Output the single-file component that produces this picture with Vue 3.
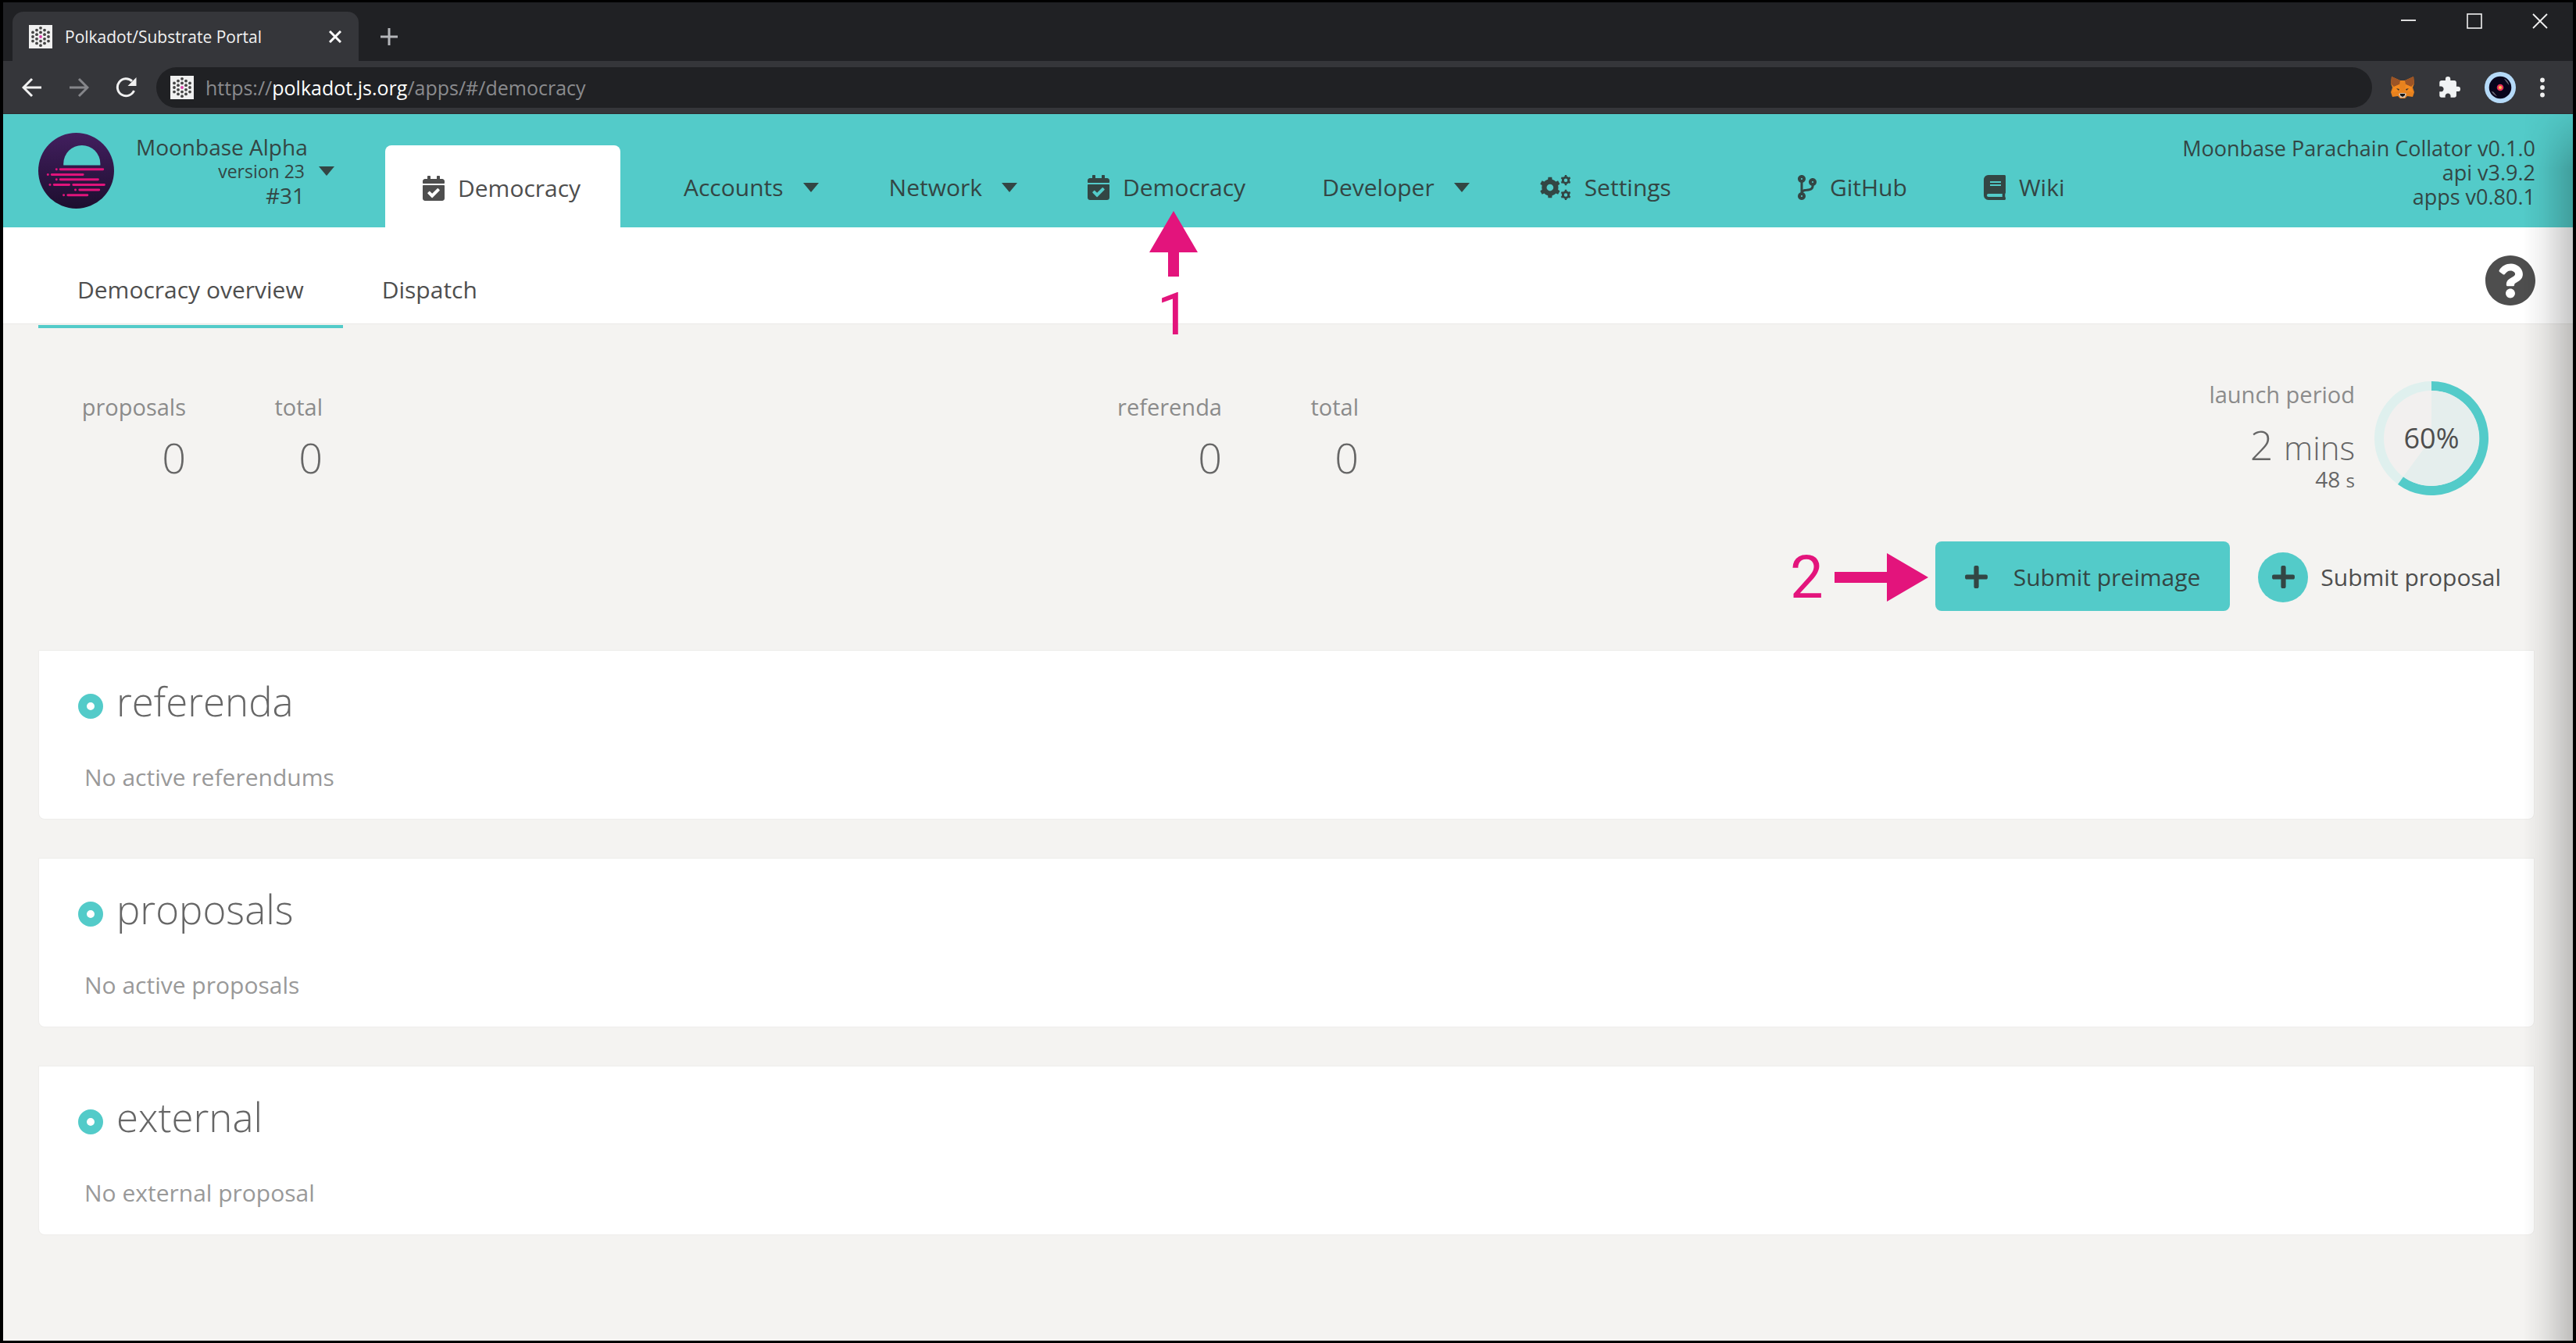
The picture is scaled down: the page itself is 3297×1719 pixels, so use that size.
<script setup>
const icons = {
  calendar: {
    box: '0 0 448 512',
    d: 'M436 160H12c-6.627 0-12-5.373-12-12v-36c0-26.51 21.49-48 48-48h48V12c0-6.627 5.373-12 12-12h40c6.627 0 12 5.373 12 12v52h128V12c0-6.627 5.373-12 12-12h40c6.627 0 12 5.373 12 12v52h48c26.51 0 48 21.49 48 48v36c0 6.627-5.373 12-12 12zM12 192h424c6.627 0 12 5.373 12 12v260c0 26.51-21.49 48-48 48H48c-26.51 0-48-21.49-48-48V204c0-6.627 5.373-12 12-12zm333.296 95.947l-28.169-28.398c-4.667-4.705-12.265-4.736-16.97-.068L194.12 364.665l-45.98-46.352c-4.667-4.705-12.266-4.736-16.971-.068l-28.397 28.17c-4.705 4.667-4.736 12.265-.068 16.97l82.601 83.269c4.667 4.705 12.265 4.736 16.97.068l142.953-141.805c4.705-4.667 4.736-12.265.068-16.97z'
  },
  branch: {
    box: '0 0 384 512',
    d: 'M384 144c0-44.2-35.8-80-80-80s-80 35.8-80 80c0 36.4 24.3 67.1 57.5 76.8-.6 16.1-4.2 28.5-11 36.9-15.4 19.2-49.3 22.4-85.2 25.7-28.2 2.6-57.4 5.4-81.3 16.9v-144c32.5-10.2 56-40.5 56-76.3 0-44.2-35.8-80-80-80S0 35.8 0 80c0 35.8 23.5 66.1 56 76.3v199.3C23.5 365.9 0 396.2 0 432c0 44.2 35.8 80 80 80s80-35.8 80-80c0-34-21.2-63.1-51.2-74.6 3.1-5.2 7.8-9.8 14.9-13.4 16.2-8.2 40.4-10.4 66.1-12.8 42.2-3.9 90-8.4 118.2-43.4 14-17.4 21.1-39.8 21.6-67.9 31.6-10.8 54.4-40.7 54.4-75.9zM80 64c8.8 0 16 7.2 16 16s-7.2 16-16 16-16-7.2-16-16 7.2-16 16-16zm0 384c-8.8 0-16-7.2-16-16s7.2-16 16-16 16 7.2 16 16-7.2 16-16 16zm224-320c8.8 0 16 7.2 16 16s-7.2 16-16 16-16-7.2-16-16 7.2-16 16-16z'
  },
  book: {
    box: '0 0 448 512',
    d: 'M448 360V24c0-13.3-10.7-24-24-24H96C43 0 0 43 0 96v320c0 53 43 96 96 96h328c13.3 0 24-10.7 24-24v-16c0-7.5-3.5-14.3-8.9-18.7-4.2-15.4-4.2-59.3 0-74.7 5.4-4.3 8.9-11.1 8.9-18.6zM128 134c0-3.3 2.7-6 6-6h212c3.3 0 6 2.7 6 6v20c0 3.3-2.7 6-6 6H134c-3.3 0-6-2.7-6-6v-20zm0 64c0-3.3 2.7-6 6-6h212c3.3 0 6 2.7 6 6v20c0 3.3-2.7 6-6 6H134c-3.3 0-6-2.7-6-6v-20zm253.4 250H96c-17.7 0-32-14.3-32-32 0-17.6 14.4-32 32-32h285.4c-1.9 17.1-1.9 46.9 0 64z'
  },
  cogs: {
    box: '0 0 640 512',
    d: gear(206, 256, 170, 214, 70, 6) + gear(528, 106, 82, 106, 36, 6) + gear(528, 406, 82, 106, 36, 6)
  }
}
const plusPath =
  'M416 208H272V64c0-17.67-14.33-32-32-32h-32c-17.67 0-32 14.33-32 32v144H32c-17.67 0-32 14.33-32 32v32c0 17.67 14.33 32 32 32h144v144c0 17.67 14.33 32 32 32h32c17.67 0 32-14.33 32-32V304h144c17.67 0 32-14.33 32-32v-32c0-17.67-14.33-32-32-32z'

// Cog outline with trapezoid teeth and a round hole (drawn with even-odd fill).
function gear(cx, cy, body, tip, hole, teeth) {
  const at = (r, a) => `${(cx + r * Math.sin(a)).toFixed(1)} ${(cy - r * Math.cos(a)).toFixed(1)}`
  const step = (Math.PI * 2) / teeth
  const points = []
  for (let i = 0; i < teeth; i++) {
    const a = i * step
    points.push(at(body, a - step * 0.25), at(tip, a - step * 0.17), at(tip, a + step * 0.17), at(body, a + step * 0.25))
    points.push(at(body, a + step * 0.5))
  }
  return `M${points.join('L')}ZM${cx - hole} ${cy}a${hole} ${hole} 0 1 0 ${hole * 2} 0a${hole} ${hole} 0 1 0 ${-hole * 2} 0Z`
}

const nav = [
  { label: 'Accounts', menu: true },
  { label: 'Network', menu: true },
  { label: 'Democracy', icon: 'calendar', step: '1' },
  { label: 'Developer', menu: true },
  { label: 'Settings', icon: 'cogs' },
  { label: 'GitHub', icon: 'branch', external: true },
  { label: 'Wiki', icon: 'book' }
]

const sections = [
  { title: 'referenda', empty: 'No active referendums' },
  { title: 'proposals', empty: 'No active proposals' },
  { title: 'external', empty: 'No external proposal' }
]

// Favicon: hexagon of dots in five columns.
const dots = [3, 4, 5, 4, 3].flatMap((n, col) =>
  Array.from({ length: n }, (_, i) => ({ x: 5 + col * 5, y: 15 + (i - (n - 1) / 2) * 5.6 }))
)
</script>

<template>
  <div class="window">
    <div class="tabstrip">
      <div class="browser-tab">
        <svg class="favicon" viewBox="0 0 30 30">
          <rect width="30" height="30" fill="#f0f0f0" />
          <circle v-for="(p, i) in dots" :key="i" :cx="p.x" :cy="p.y" r="1.9" :fill="i === 9 ? '#d93fa8' : '#444'" />
        </svg>
        <span class="tab-title">Polkadot/Substrate Portal</span>
        <button class="plain" aria-label="Close tab">
          <svg width="16" height="16" viewBox="0 0 16 16"><path d="M1 1l14 14M15 1L1 15" stroke="#fff" stroke-width="3" /></svg>
        </button>
      </div>
      <button class="plain new-tab" aria-label="New tab">
        <svg width="22" height="22" viewBox="0 0 22 22"><path d="M11 0v22M0 11h22" stroke="#b4b6b9" stroke-width="3" /></svg>
      </button>
      <div class="window-controls">
        <button class="plain" aria-label="Minimize"><svg width="20" height="20" viewBox="0 0 20 20"><path d="M0 9h19" stroke="#ddd" stroke-width="2" /></svg></button>
        <button class="plain" aria-label="Maximize"><svg width="20" height="20" viewBox="0 0 20 20"><rect x="1" y="1" width="18" height="18" fill="none" stroke="#f0f0f0" stroke-width="1.6" /></svg></button>
        <button class="plain" aria-label="Close"><svg width="20" height="20" viewBox="0 0 20 20"><path d="M1 1l18 18M19 1L1 19" stroke="#f0f0f0" stroke-width="1.8" /></svg></button>
      </div>
    </div>

    <div class="toolbar">
      <div class="history">
        <button class="plain" aria-label="Back"><svg width="26" height="26" viewBox="0 0 26 26"><path d="M25 13H3M13 2L2 13l11 11" fill="none" stroke="#f1f1f1" stroke-width="3" /></svg></button>
        <button class="plain" aria-label="Forward"><svg width="26" height="26" viewBox="0 0 26 26"><path d="M1 13h22M13 2l11 11-11 11" fill="none" stroke="#85868a" stroke-width="3" /></svg></button>
        <button class="plain" aria-label="Reload"><svg width="28" height="26" viewBox="0 0 28 26"><path d="M23.500 17A11 11 0 1 1 21 4.800" fill="none" stroke="#f1f1f1" stroke-width="3" /><path d="M26.500 0v11H15.500z" fill="#f1f1f1" /></svg></button>
      </div>
      <div class="address">
        <svg class="favicon" viewBox="0 0 30 30">
          <rect width="30" height="30" fill="#f0f0f0" />
          <circle v-for="(p, i) in dots" :key="i" :cx="p.x" :cy="p.y" r="1.9" :fill="i === 9 ? '#d93fa8' : '#444'" />
        </svg>
        <span class="url">https://<b>polkadot.js.org</b>/apps/#/democracy</span>
      </div>
      <div class="extensions">
        <button class="plain" aria-label="Wallet">
          <svg width="30" height="28" viewBox="0 0 30 28">
            <path d="M1 0l11 5h6l11-5 1 9-2 5 2 6-2 6-7-1-3 3h-6l-3-3-7 1-2-6 2-6-2-5z" fill="#e8821e" />
            <path d="M1 0l11 5-1 5-7 3-4-4zM29 0L18 5l1 5 7 3 4-4z" fill="#9c5426" />
            <path d="M4 13l7-3 1 8-10 2zM26 13l-7-3-1 8 10 2z" fill="#f58a1f" />
            <path d="M7 15l4 1-1 2zM23 15l-4 1 1 2z" fill="#333" />
            <path d="M10 22l3-1h4l3 1-2 5h-6z" fill="#d5c3b5" />
            <path d="M12 22h6v2l-3 2-3-2z" fill="#161616" />
          </svg>
        </button>
        <button class="plain" aria-label="Extensions">
          <svg width="28" height="28" viewBox="1 1 22 22"><path fill="#f1f3f4" d="M20.500 11H19V7c0-1.100-.9-2-2-2h-4V3.500a2.500 2.500 0 0 0-5 0V5H4c-1.100 0-2 .9-2 2v3.800h1.500c1.500 0 2.700 1.200 2.700 2.700S5 16.200 3.500 16.200H2V20c0 1.100.9 2 2 2h3.800v-1.500c0-1.500 1.200-2.700 2.700-2.700s2.700 1.200 2.700 2.700V22H17c1.100 0 2-.9 2-2v-4h1.500a2.500 2.500 0 0 0 0-5z" /></svg>
        </button>
        <button class="plain" aria-label="Profile">
          <svg width="40" height="40" viewBox="0 0 42 42">
            <circle cx="21" cy="21" r="21" fill="#b5daf8" />
            <circle cx="21" cy="21" r="15" fill="#08051c" />
            <path d="M26 9q6 3 7 9l-4-5zM9 26q3 5 8 7l-5-6z" fill="#6d6c78" />
            <circle cx="21" cy="21" r="4.500" fill="#e8305a" />
            <circle cx="21" cy="21" r="2.200" fill="#fbc04a" />
          </svg>
        </button>
        <button class="plain" aria-label="Browser menu">
          <svg width="6" height="26" viewBox="0 0 6 26"><g fill="#f1f1f1"><circle cx="3" cy="3.500" r="2.900" /><circle cx="3" cy="13" r="2.900" /><circle cx="3" cy="22.500" r="2.900" /></g></svg>
        </button>
      </div>
    </div>

    <div class="page">
      <header class="header">
        <svg class="logo" viewBox="86 465 292 292">
          <defs>
            <linearGradient id="moon" x1="0" y1="0" x2="0" y2="1">
              <stop offset="0" stop-color="#421f5f" />
              <stop offset="1" stop-color="#1d0e2e" />
            </linearGradient>
          </defs>
          <circle cx="232" cy="611" r="146" fill="url(#moon)" />
          <path d="M183 590v-6a71 71 0 0 1 142 0v6z" fill="#53cbc9" />
          <g stroke="#e1147b" stroke-width="9" stroke-linecap="round">
            <path d="M156 606h.1M171 606h164M123 626h.1M138 626h120M156 645h.1M171 645h145M131 665h.1M147 665h58M221 665h119M229 685h.1M245 685h75M184 705h.1M200 705h75" />
          </g>
        </svg>
        <button class="plain chain">
          <span class="chain-text">
            <span>Moonbase Alpha</span>
            <small>version 23</small>
            <span>#31</span>
          </span>
          <svg class="caret" viewBox="0 0 20 12"><path d="M0 0h20L10 12z" fill="currentColor" /></svg>
        </button>
        <a class="active-app" href="#/democracy">
          <svg class="icon" :viewBox="icons.calendar.box"><path :d="icons.calendar.d" /></svg>
          Democracy
        </a>
        <nav class="nav">
          <a
            v-for="item in nav"
            :key="item.label"
            href="#"
            class="nav-item"
            :class="{ external: item.external, plainlink: !item.menu }"
          >
            <svg v-if="item.icon" class="icon" :viewBox="icons[item.icon].box">
              <path fill-rule="evenodd" :d="icons[item.icon].d" />
            </svg>
            {{ item.label }}
            <svg v-if="item.menu" class="caret" viewBox="0 0 20 12"><path d="M0 0h20L10 12z" fill="currentColor" /></svg>
            <span v-if="item.step" class="step step-up">
              <svg width="62" height="84" viewBox="0 0 62 84"><path d="M31 0l31 53H38v31H24V53H0z" fill="#e3147c" /></svg>
              {{ item.step }}
            </span>
          </a>
        </nav>
        <div class="versions">
          <div>Moonbase Parachain Collator v0.1.0</div>
          <div>api v3.9.2</div>
          <div>apps v0.80.1</div>
        </div>
      </header>

      <div class="tabs">
        <a class="tab current" href="#/democracy">Democracy overview</a>
        <a class="tab" href="#/democracy/dispatch">Dispatch</a>
        <button class="plain help" aria-label="Help">
          <svg width="64" height="64" viewBox="8 8 496 496"><path fill="#4e4e4e" d="M504 256c0 136.997-111.043 248-248 248S8 392.997 8 256C8 119.083 119.043 8 256 8s248 111.083 248 248zM262.655 90c-54.497 0-89.255 22.957-116.549 63.758-3.536 5.286-2.353 12.415 2.715 16.258l34.699 26.31c5.205 3.947 12.621 3.008 16.665-2.122 17.864-22.658 30.113-35.797 57.303-35.797 20.429 0 45.698 13.148 45.698 32.958 0 14.976-12.363 22.667-32.534 33.976C247.128 238.528 216 254.941 216 296v4c0 6.627 5.373 12 12 12h56c6.627 0 12-5.373 12-12v-1.333c0-28.462 83.186-29.647 83.186-106.667 0-58.002-60.165-102-116.531-102zM256 338c-25.365 0-46 20.635-46 46 0 25.364 20.635 46 46 46s46-20.636 46-46c0-25.365-20.635-46-46-46z" /></svg>
        </button>
      </div>

      <main class="content">
        <div class="summary">
          <div class="figures">
            <div class="figure first"><span class="label">proposals</span><span class="value">0</span></div>
            <div class="figure"><span class="label">total</span><span class="value">0</span></div>
          </div>
          <div class="figures">
            <div class="figure first"><span class="label">referenda</span><span class="value">0</span></div>
            <div class="figure"><span class="label">total</span><span class="value">0</span></div>
          </div>
          <div class="period">
            <div class="figure launch">
              <span class="label">launch period</span>
              <span class="value minutes">2 <small>mins</small></span>
              <span class="seconds">48 <small>s</small></span>
            </div>
            <div class="progress">
              <svg viewBox="-73 -73 146 146">
                <circle r="73" fill="#dff0ee" />
                <path d="M0 0V-73A73 73 0 1 1 -43 59Z" fill="#53cbc9" />
                <circle r="61" fill="#f2f0ef" />
                <path d="M0 0V-61A61 61 0 1 1 -36 49Z" fill="#e5eeed" />
              </svg>
              <span>60%</span>
            </div>
          </div>
        </div>

        <div class="actions">
          <button class="preimage">
            <span class="step step-right">
              2
              <svg width="120" height="62" viewBox="0 0 120 62"><path d="M0 24h67V0l53 31-53 31V38H0z" fill="#e3147c" /></svg>
            </span>
            <svg class="plus" viewBox="0 0 448 512"><path :d="plusPath" /></svg>
            Submit preimage
          </button>
          <button class="plain proposal">
            <span class="disc"><svg class="plus" viewBox="0 0 448 512"><path :d="plusPath" /></svg></span>
            Submit proposal
          </button>
        </div>

        <section v-for="s in sections" :key="s.title" class="card">
          <h1><span class="ring"></span>{{ s.title }}</h1>
          <p>{{ s.empty }}</p>
        </section>
      </main>
      <div class="edge-shade"></div>
    </div>
  </div>
</template>

<style>
body {
  margin: 0;
  background: #000;
}
</style>

<style scoped>
* {
  box-sizing: border-box;
}
.window {
  min-height: 100vh;
  display: flex;
  flex-direction: column;
  border: solid #000;
  border-width: 3px 4px;
  background: #f4f3f1;
  color: #4e4e4e;
  font-family: 'Open Sans', 'Noto Sans', sans-serif;
  font-size: 30px;
  line-height: 42px;
  white-space: nowrap;
}
a {
  color: inherit;
  text-decoration: none;
}
svg {
  display: block;
  flex: none;
}
button {
  font: inherit;
  color: inherit;
  border: 0;
  cursor: pointer;
}
.plain {
  display: flex;
  align-items: center;
  padding: 0;
  background: none;
}

.tabstrip {
  display: flex;
  align-items: flex-end;
  height: 75px;
  padding-left: 12px;
  background: #202124;
}
.browser-tab {
  display: flex;
  align-items: center;
  gap: 16px;
  width: 443px;
  height: 63px;
  padding: 0 22px 0 21px;
  border-radius: 14px 14px 0 0;
  background: #35363a;
  color: #f1f1f1;
  font-size: 21px;
}
.favicon {
  width: 30px;
  height: 30px;
}
.tab-title {
  flex: 1;
}
.new-tab {
  height: 63px;
  margin-left: 28px;
}
.window-controls {
  display: flex;
  align-self: flex-start;
  gap: 64px;
  margin: 14px 32px 0 auto;
}
.toolbar {
  display: flex;
  align-items: center;
  height: 68px;
  padding: 0 36px 0 24px;
  background: #35363a;
  border-bottom: 1px solid #2b2c2f;
}
.history {
  display: flex;
  gap: 34px;
  width: 172px;
}
.address {
  flex: 1;
  display: flex;
  align-items: center;
  gap: 15px;
  height: 52px;
  padding-left: 18px;
  border-radius: 26px;
  background: #202124;
  color: #8a8b8e;
  font-size: 25px;
}
.url b {
  color: #fff;
  font-weight: 400;
}
.extensions {
  display: flex;
  align-items: center;
  gap: 31px;
  margin-left: 24px;
}

.page {
  position: relative;
  flex: 1;
}
.header {
  display: flex;
  align-items: center;
  height: 145px;
  padding: 0 48px 0 45px;
  background: #53cbc9;
  color: #334644;
}
.logo {
  width: 97px;
  height: 97px;
}
.chain {
  gap: 18px;
  margin-left: 28px;
}
.chain-text {
  display: flex;
  flex-direction: column;
  width: 216px;
  padding-top: 2px;
  text-align: right;
  font-size: 28px;
  line-height: 31px;
}
.chain-text small {
  font-size: 23px;
}
.caret {
  width: 20px;
  height: 12px;
}
.active-app {
  display: flex;
  align-items: center;
  align-self: flex-end;
  gap: 17px;
  width: 301px;
  height: 105px;
  margin-left: 65px;
  padding: 4px 0 0 48px;
  border-radius: 8px 8px 0 0;
  background: #fff;
  color: #4e4e4e;
}
.icon {
  height: 32px;
  width: auto;
  fill: currentColor;
}
.nav {
  display: flex;
  gap: 90px;
  align-self: flex-end;
  margin: 0 auto 0 81px;
  padding-bottom: 30px;
}
.nav-item {
  position: relative;
  display: flex;
  align-items: center;
  gap: 17px;
}
.plainlink {
  padding-right: 8px;
}
.nav-item .caret {
  margin-left: 8px;
}
.external {
  margin-left: 64px;
}
.versions {
  padding-top: 3px;
  text-align: right;
  font-size: 27px;
  line-height: 31px;
}

.step {
  position: absolute;
  display: flex;
  align-items: center;
  color: #e3147c;
  font-family: Roboto, sans-serif;
  font-size: 76px;
  line-height: 76px;
}
.step-up {
  top: 51px;
  right: 69px;
  flex-direction: column;
  gap: 10px;
}
.step-right {
  right: 100%;
  margin-right: 9px;
  gap: 14px;
}

.tabs {
  display: flex;
  height: 124px;
  padding: 0 48px 0 45px;
  background: #fff;
  border-bottom: 1px solid #eae9e7;
}
.tab {
  height: 129px;
  padding: 59px 50px 0;
}
.current {
  border-bottom: 4px solid #53cbc9;
}
.help {
  align-self: center;
  margin: 12px 0 0 auto;
}

.content {
  padding: 0 49px 0 45px;
}
.summary {
  display: flex;
  align-items: flex-start;
  height: 278px;
  padding: 73px 59px 0 0;
}
.figures {
  display: flex;
  width: 1326px;
}
.figure {
  display: flex;
  flex-direction: column;
  width: 175px;
  text-align: right;
  color: #666;
}
.first {
  width: 189px;
}
.figures .figure {
  padding-top: 12px;
}
.label {
  color: #8b8b8b;
  font-size: 29px;
}
.value {
  margin-top: 10px;
  font-size: 54px;
  font-weight: 300;
  line-height: 66px;
}
.launch .value {
  font-size: 52px;
}
.minutes small {
  font-size: 42px;
}
.period {
  display: flex;
  gap: 25px;
  margin-left: auto;
}
.launch {
  width: auto;
  margin-top: -4px;
}
.seconds {
  margin-top: -14px;
  font-size: 28px;
}
.seconds small {
  font-size: 24px;
}
.progress {
  display: grid;
  place-items: center;
  width: 146px;
  height: 146px;
  font-size: 36px;
}
.progress > * {
  grid-area: 1 / 1;
}

.actions {
  display: flex;
  justify-content: flex-end;
  gap: 36px;
  padding-right: 43px;
  margin-bottom: 50px;
}
.preimage {
  position: relative;
  display: flex;
  align-items: center;
  gap: 33px;
  height: 89px;
  padding: 2px 38px 0;
  border-radius: 8px;
  background: #53cbc9;
  color: #334644;
}
.plus {
  width: 29px;
  height: 33px;
  fill: #334644;
}
.proposal {
  gap: 16px;
  padding-top: 2px;
}
.disc {
  display: grid;
  place-items: center;
  width: 64px;
  height: 64px;
  border-radius: 50%;
  background: #53cbc9;
}

.card {
  height: 217px;
  margin-bottom: 49px;
  padding: 28px 50px 0;
  border: 1px solid #eeedeb;
  border-radius: 0 0 8px 8px;
  background: #fff;
}
h1 {
  display: flex;
  align-items: center;
  gap: 17px;
  margin: 0;
  color: #666;
  font-size: 51px;
  font-weight: 300;
  line-height: 72px;
}
.ring {
  width: 32px;
  height: 32px;
  margin-top: 14px;
  border: 11px solid #53cbc9;
  border-radius: 50%;
}
p {
  margin: 41px 8px 0;
  color: #999;
}
.edge-shade {
  position: absolute;
  top: 0;
  right: 0;
  bottom: 0;
  width: 64px;
  pointer-events: none;
  background: linear-gradient(to right, rgba(0, 0, 0, 0), rgba(0, 0, 0, 0.06) 40%, rgba(0, 0, 0, 0.22));
  mask-image: linear-gradient(to bottom, rgba(0, 0, 0, 0.2), #000 70px);
}
</style>
